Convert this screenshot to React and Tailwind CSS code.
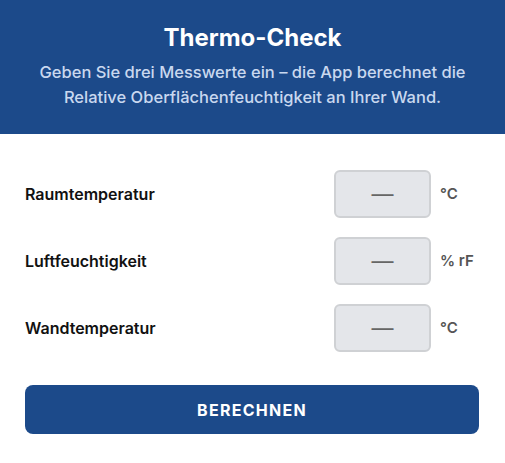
const rows = [
  { label: "Raumtemperatur", unit: "°C" },
  { label: "Luftfeuchtigkeit", unit: "% rF" },
  { label: "Wandtemperatur", unit: "°C" },
];

export default function App() {
  return (
    <div className="w-[505px] min-h-[463px] bg-white font-['Inter',sans-serif]">
      {/* Header */}
      <div className="bg-[#1c4a8a] px-6 pt-[22px] pb-[24px] text-center">
        <h1 className="text-[24px] leading-8 font-bold text-white">Thermo-Check</h1>
        <p className="mt-[6px] mx-auto max-w-[470px] text-[16.5px] leading-[25px] font-medium text-[#c9d8ef]">
          Geben Sie drei Messwerte ein – die App berechnet die Relative Oberflächenfeuchtigkeit an Ihrer Wand.
        </p>
      </div>

      {/* Inputs */}
      <div className="px-[25px] pt-9">
        <div className="flex flex-col gap-[19px]">
          {rows.map((r) => (
            <div key={r.label} className="flex items-center">
              <span className="flex-1 text-[16px] font-semibold text-[#111]">{r.label}</span>
              <div className="w-[97px] h-[48px] rounded-md border-2 border-[#cfd1d4] bg-[#e4e6ea] flex items-center justify-center text-[22px] leading-none text-[#666]">
                —
              </div>
              <span className="w-[49px] pl-[9px] text-[15px] font-semibold text-[#555]">{r.unit}</span>
            </div>
          ))}
        </div>

        <button className="mt-[33px] w-[454px] h-[49px] rounded-lg bg-[#1c4a8a] text-white text-[16px] font-bold tracking-[0.08em]">
          BERECHNEN
        </button>
      </div>
    </div>
  );
}
